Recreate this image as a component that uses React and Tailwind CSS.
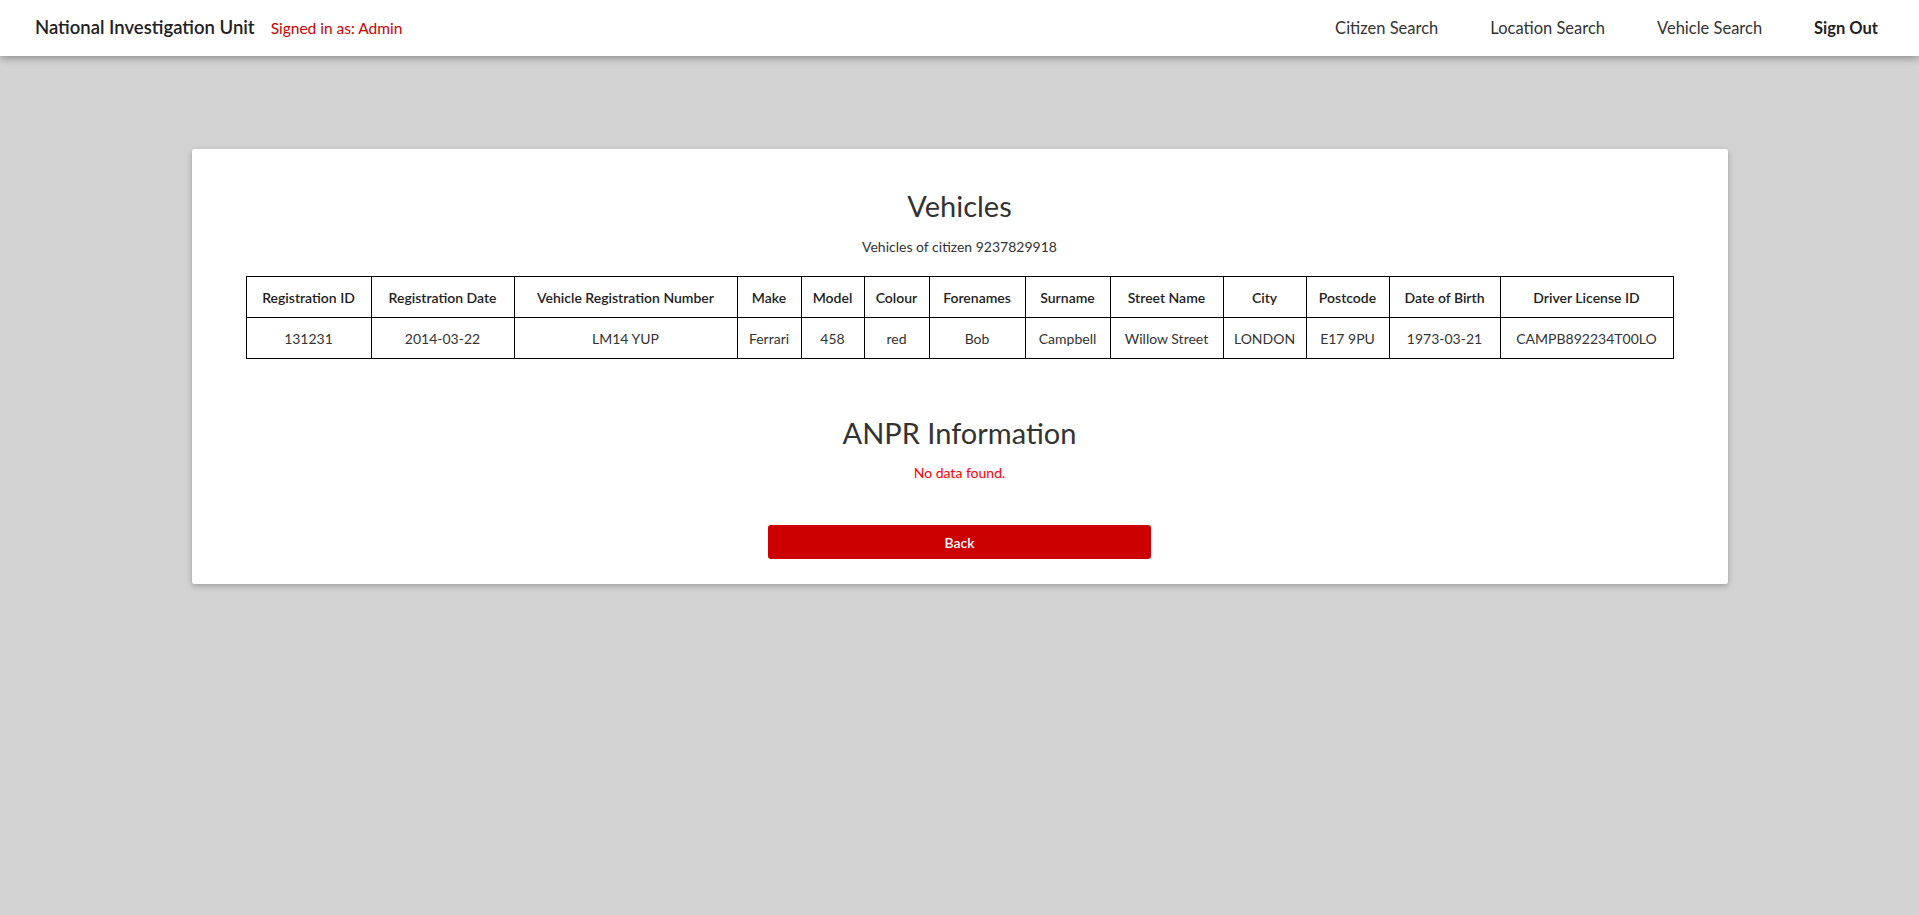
import React from "react";

const columns = [
  ["Registration ID", "131231", "w-[125px]"],
  ["Registration Date", "2014-03-22", "w-[143px]"],
  ["Vehicle Registration Number", "LM14 YUP", "w-[223px]"],
  ["Make", "Ferrari", "w-[64px]"],
  ["Model", "458", "w-[63px]"],
  ["Colour", "red", "w-[65px]"],
  ["Forenames", "Bob", "w-[96px]"],
  ["Surname", "Campbell", "w-[85px]"],
  ["Street Name", "Willow Street", "w-[113px]"],
  ["City", "LONDON", "w-[83px]"],
  ["Postcode", "E17 9PU", "w-[83px]"],
  ["Date of Birth", "1973-03-21", "w-[111px]"],
  ["Driver License ID", "CAMPB892234T00LO", "w-[173px]"],
];

export default function App() {
  return (
    <div className="min-h-screen bg-[#d3d3d3] text-[#333] font-['Lato',sans-serif]">
      <nav className="h-[56px] bg-white shadow-[0_2px_8px_rgba(0,0,0,0.35)] flex items-center justify-between pl-[35px] pr-[41px]">
        <div className="flex items-baseline gap-[16px]">
          <span className="text-[18.5px] font-semibold text-[#222]">National Investigation Unit</span>
          <span className="text-[15.5px] text-[#cc0000]">Signed in as: Admin</span>
        </div>
        <div className="flex items-center gap-[52px] text-[16.5px] text-[#333]">
          <a href="#">Citizen Search</a>
          <a href="#">Location Search</a>
          <a href="#">Vehicle Search</a>
          <a href="#" className="font-bold text-[#222]">Sign Out</a>
        </div>
      </nav>

      <div className="pt-[93px] flex justify-center">
        <div className="w-[1536px] bg-white rounded-[3px] shadow-[0_2px_6px_rgba(0,0,0,0.25)] px-[54px] pt-[38px] pb-[25px] flex flex-col items-center">
          <h2 className="text-[29px] leading-[38px]">Vehicles</h2>
          <p className="text-[14px] mt-[11px]">Vehicles of citizen 9237829918</p>
          <table className="mt-[19px] w-[1427px] border-collapse border border-black text-[14px] table-fixed">
            <thead>
              <tr>
                {columns.map(([h, , w]) => (
                  <th key={h} className={`${w} h-[41px] border border-black font-semibold text-[#222] px-1`}>
                    {h}
                  </th>
                ))}
              </tr>
            </thead>
            <tbody>
              <tr>
                {columns.map(([h, v]) => (
                  <td key={h} className="h-[41px] border border-black text-center px-1">
                    {v}
                  </td>
                ))}
              </tr>
            </tbody>
          </table>

          <h2 className="text-[29px] leading-[38px] mt-[55px]">ANPR Information</h2>
          <p className="text-[14px] text-[#ff0000] mt-[10px]">No data found.</p>

          <button className="mt-[42px] w-[383px] h-[34px] bg-[#cc0000] text-white text-[14px] font-semibold rounded-[3px]">
            Back
          </button>
        </div>
      </div>
    </div>
  );
}
